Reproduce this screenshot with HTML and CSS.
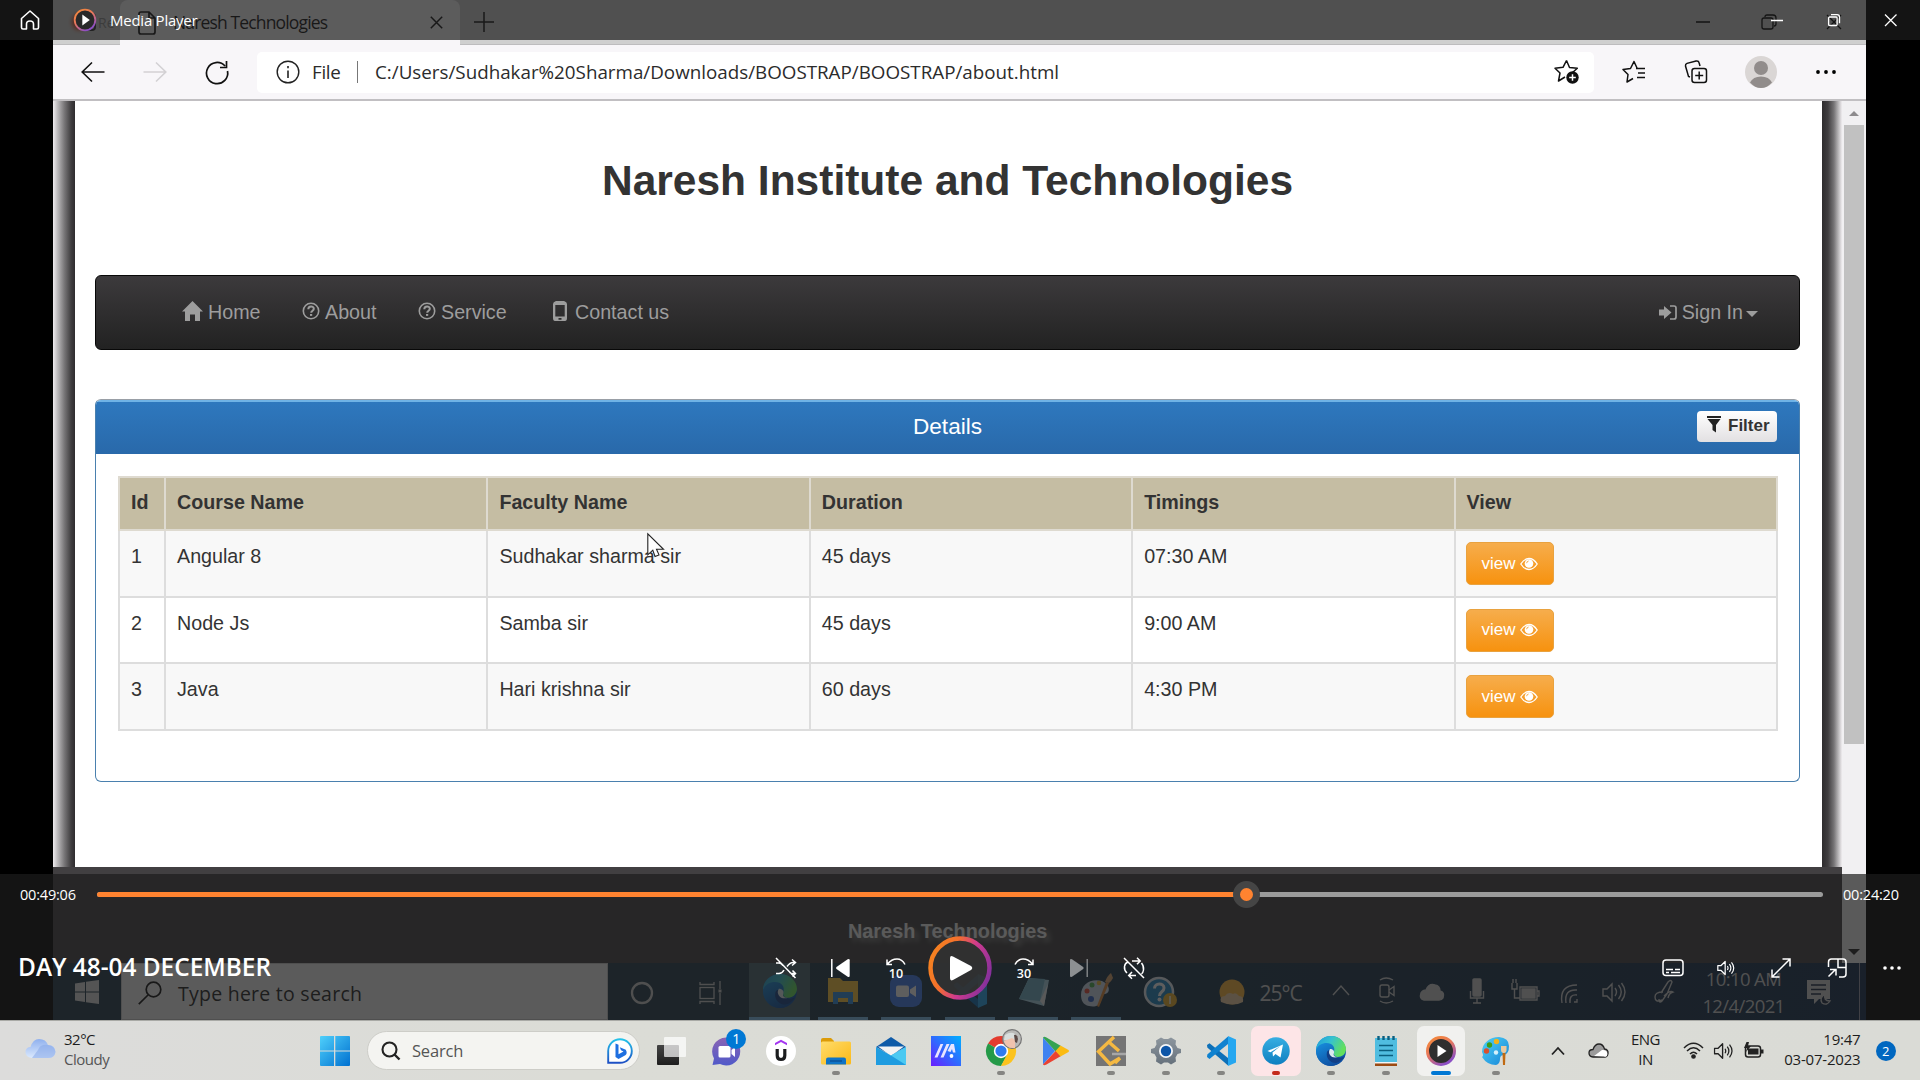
FILE: index.html
```html
<!DOCTYPE html>
<html lang="en">
<head>
<meta charset="utf-8">
<title>Media Player</title>
<link rel="stylesheet" href="styles.css">
</head>
<body>
<svg class="defs" aria-hidden="true">
  <defs>
    <linearGradient id="gRing" x1="0" y1=".3" x2="1" y2=".7"><stop offset="0" stop-color="#f58220"/><stop offset=".3" stop-color="#f4702c"/><stop offset=".6" stop-color="#cf3a8e"/><stop offset="1" stop-color="#83309c"/></linearGradient>
    <linearGradient id="gRing2" x1="0" y1="0" x2=".6" y2="1"><stop offset="0" stop-color="#f58a35"/><stop offset=".5" stop-color="#e8785c"/><stop offset="1" stop-color="#8c4fc4"/></linearGradient>
    <linearGradient id="gWin" x1="0" y1="0" x2="1" y2="1"><stop offset="0" stop-color="#4fd0fb"/><stop offset="1" stop-color="#0070d0"/></linearGradient>
    <linearGradient id="gEdgeA" x1="0" y1="0" x2="1" y2=".4"><stop offset="0" stop-color="#1f9bdc"/><stop offset=".5" stop-color="#35c1d0"/><stop offset="1" stop-color="#63e05c"/></linearGradient>
    <linearGradient id="gEdgeB" x1="0" y1="0" x2=".6" y2="1"><stop offset="0" stop-color="#1790df"/><stop offset="1" stop-color="#0f4ea0"/></linearGradient>
    <linearGradient id="gFolder" x1="0" y1="0" x2="1" y2="1"><stop offset="0" stop-color="#ffdc6b"/><stop offset="1" stop-color="#fbb917"/></linearGradient>
    <linearGradient id="gMa" x1="0" y1="1" x2="1" y2="0"><stop offset="0" stop-color="#6a1cff"/><stop offset=".5" stop-color="#2f6bff"/><stop offset="1" stop-color="#00b0ff"/></linearGradient>
    <linearGradient id="gChat" x1="0" y1="0" x2="0" y2="1"><stop offset="0" stop-color="#8a64b4"/><stop offset="1" stop-color="#5059c9"/></linearGradient>
    <linearGradient id="gCloud" x1="0" y1="0" x2="0" y2="1"><stop offset="0" stop-color="#8fb0ee"/><stop offset="1" stop-color="#dbe9fd"/></linearGradient>
    <linearGradient id="gTg" x1="0" y1="0" x2="0" y2="1"><stop offset="0" stop-color="#37aee2"/><stop offset="1" stop-color="#0f7fc0"/></linearGradient>
    <linearGradient id="gPaint" x1="0" y1="0" x2="1" y2="1"><stop offset="0" stop-color="#4fd2f7"/><stop offset="1" stop-color="#1583d6"/></linearGradient>
    <linearGradient id="gGear" x1="0" y1="0" x2="0" y2="1"><stop offset="0" stop-color="#8d969e"/><stop offset="1" stop-color="#66717c"/></linearGradient>
    <linearGradient id="gDark" x1="0" y1="0" x2="0" y2="1"><stop offset="0" stop-color="#444"/><stop offset="1" stop-color="#1e1e1e"/></linearGradient>
    <linearGradient id="gBing" x1="0" y1="0" x2="0" y2="1"><stop offset="0" stop-color="#24c3ea"/><stop offset="1" stop-color="#1d4fc4"/></linearGradient>
    <symbol id="eye" viewBox="0 0 18 14"><path d="M.8 7C3.500 2.800 6 1.500 9 1.500S14.500 2.800 17.200 7c-2.700 4.200-5.200 5.500-8.200 5.500S3.500 11.200.8 7z" fill="none" stroke="#fff" stroke-width="1.300"/><circle cx="9" cy="6.500" r="4.300" fill="#fff"/><path d="M6.600 6.200A2.500 2.500 0 0 1 8.600 4" fill="none" stroke="#f4a338" stroke-width=".9"/></symbol>
    <symbol id="edge" viewBox="0 0 30 30"><circle cx="15" cy="15" r="15" fill="url(#gEdgeB)"/><path d="M0 14C0 6 7 0 15 0c9 0 15 7 15 13 0 5-4 8-8.500 8-4 0-5-1.500-4-3 1-2 0-7-6-7C6 11 1 13 0 14z" fill="url(#gEdgeA)"/><path d="M0 14C2 9 6 7 10.500 7c6 0 9 4 7.500 9-1 3 1 5.200 5 5.200 3 0 5-1 5.700-.9C27 25 22 30 15 30 7 30 0 24 0 14z" fill="url(#gEdgeB)"/><path d="M11 16c-1.500 6 3 11 9 11 4-1 7-4 8.300-6.500C24 23 18 22 17 17c-1-3-5-4-6-1z" fill="#123f86"/><path d="M14 13c3 0 4.500 2 4 4-1 2 0 4 4 4-3 1-6.500.500-8-2-1.300-2-1.300-4 0-6z" fill="#dbe9ee"/></symbol>
    <symbol id="vscode" viewBox="0 0 30 30"><path d="M1 9l2.500-1.800L22 22v7.500L1.300 11.500z" fill="#0d70b8"/><path d="M1 21l2.500 2L22 8V.5L1.300 18.500z" fill="#0f82d0"/><path d="M22 0l8 3.500v23L22 30z" fill="#25a7f0"/></symbol>
    <symbol id="glyphQ" viewBox="0 0 18 18"><circle cx="9" cy="9" r="7.700" fill="none" stroke="#9d9d9d" stroke-width="1.600"/><path d="M6.300 7.300c0-3.600 5.500-3.600 5.500-.5 0 2-2.600 1.800-2.600 4" fill="none" stroke="#9d9d9d" stroke-width="2"/><path d="M8 12h2.200v1.900H8z" fill="#9d9d9d"/></symbol>
    <symbol id="speaker" viewBox="0 0 22 20"><path d="M1 7h4l5-5v16l-5-5H1z" fill="none" stroke="currentColor" stroke-width="1.500" stroke-linejoin="round"/><path d="M12.700 7.500q1.600 2.500 0 5M15.200 5.200q3.500 4.800 0 9.600M17.700 3q5.500 7 0 14" fill="none" stroke="currentColor" stroke-width="1.400"/></symbol>
  </defs>
</svg>

<div class="desktop">
  <main class="player">
    <div class="video">
      <div class="tabstrip">
        <div class="tab-prev"><i class="rec-dot"></i><i class="rec-box"></i><span>Re</span></div>
        <div class="tab">
          <svg class="tab-doc" width="18" height="24" viewBox="0 0 18 24"><path d="M3 1h8l6 6v14q0 2-2 2H3q-2 0-2-2V3q0-2 2-2zM11 1v6h6" fill="none" stroke="#111" stroke-width="1.700"/></svg>
          <span class="tab-title">Naresh Technologies</span>
          <svg width="13" height="13" viewBox="0 0 13 13"><path d="M.8.8l11.400 11.400M12.200.8L.8 12.200" stroke="#111" stroke-width="1.500"/></svg>
        </div>
        <svg class="tab-plus" width="20" height="20" viewBox="0 0 20 20"><path d="M10 0v20M0 10h20" stroke="#111" stroke-width="1.500"/></svg>
        <svg class="tab-win" width="146" height="16" viewBox="0 0 146 16" fill="none" stroke="#000" stroke-width="1.300"><path d="M0 8h14M131 1l14 14M145 1l-14 14"/><rect x="66" y="4" width="11" height="11" rx="2"/><path d="M69 3q0-2 2-2h6q3 0 3 3v6q0 2-2 2"/></svg>
      </div>

      <div class="toolbar">
        <svg width="24" height="20" viewBox="0 0 24 20" class="back"><path d="M23.500 10H1M11 .5L1.200 10 11 19.500" fill="none" stroke="#111" stroke-width="1.600"/></svg>
        <svg width="24" height="20" viewBox="0 0 24 20" class="fwd"><path d="M.5 10H23M13 .5L22.800 10 13 19.500" fill="none" stroke="#d3d1d4" stroke-width="1.600"/></svg>
        <svg width="24" height="24" viewBox="0 0 24 24" class="reload"><path d="M20 6A10.600 10.600 0 1 0 22.500 11M21.500 1v6.500H15" fill="none" stroke="#111" stroke-width="1.700"/></svg>
        <div class="address">
          <svg width="24" height="24" viewBox="0 0 24 24"><circle cx="12" cy="12" r="10.800" fill="none" stroke="#222" stroke-width="1.400"/><path d="M12 10.500V18M12 6v2.200" stroke="#222" stroke-width="1.600"/></svg>
          <span class="scheme">File</span>
          <i class="bar"></i>
          <span class="url">C:/Users/Sudhakar%20Sharma/Downloads/BOOSTRAP/BOOSTRAP/about.html</span>
          <svg class="addstar" width="26" height="26" viewBox="0 0 26 26"><path d="M12.500 1.500l3 7 7.800.8-5 4.500M11 18l-6.500 4 1.500-8L1 9.300l8-1 3.500-6.800" fill="none" stroke="#111" stroke-width="1.500" stroke-linejoin="round"/><circle cx="18.500" cy="18.500" r="6.200" fill="#111"/><path d="M18.500 15.200v6.600M15.200 18.500h6.600" stroke="#fff" stroke-width="1.500"/></svg>
        </div>
        <svg class="favs" width="24" height="24" viewBox="0 0 24 24"><path d="M15 8l-3-6.500L8.500 8.500 1 9.500l5 5L5 22l6-3.500M14 8.500h9M16 13h7M15 17.500h8" fill="none" stroke="#111" stroke-width="1.500" stroke-linejoin="round"/></svg>
        <svg class="coll" width="24" height="24" viewBox="0 0 24 24"><path d="M6 17L4.500 16.500 1.500 6q-.3-2 1.500-2.600L12 1q2.500-.5 3 1.500L16 6" fill="none" stroke="#111" stroke-width="1.500"/><rect x="8" y="8.500" width="14.500" height="14" rx="2.500" fill="none" stroke="#111" stroke-width="1.500"/><path d="M15.200 11.500v8M11.200 15.500h8" stroke="#111" stroke-width="1.500"/></svg>
        <svg class="avatar" width="32" height="32" viewBox="0 0 32 32"><circle cx="16" cy="16" r="16" fill="#dad6d5"/><circle cx="16" cy="12" r="7" fill="#918c8b"/><path d="M5 26.500q3-6 11-6t11 6Q22 32 16 32T5 26.500z" fill="#918c8b"/></svg>
        <svg class="dots" width="20" height="4" viewBox="0 0 20 4"><circle cx="2" cy="2" r="1.900"/><circle cx="10" cy="2" r="1.900"/><circle cx="18" cy="2" r="1.900"/></svg>
      </div>

      <div class="browser-body">
        <div class="shade shade-l"></div>
        <div class="page">
          <h1>Naresh Institute and Technologies</h1>
          <nav class="navbar">
            <a class="nav-home"><svg width="21" height="20" viewBox="0 0 21 20"><path d="M10.500 0L0 10.500h3V20h5v-6.500h5V20h5v-9.500h3z" fill="#9d9d9d"/></svg>Home</a>
            <a class="nav-about"><svg width="18" height="18"><use href="#glyphQ"/></svg>About</a>
            <a class="nav-service"><svg width="18" height="18"><use href="#glyphQ"/></svg>Service</a>
            <a class="nav-contact"><svg width="14" height="20" viewBox="0 0 14 20"><path fill-rule="evenodd" d="M3 0h8q3 1 3 3v14q0 3-2 3H2q-2 0-2-3V3q0-2 3-3zM2.300 4v11.500h9.400V4zM5.500 17v1.700h3V17z" fill="#9d9d9d"/></svg>Contact us</a>
            <a class="nav-signin"><svg width="18" height="15" viewBox="0 0 18 15"><path d="M0 4.500h5V1l7.500 6.500L5 14v-3.500H0z" fill="#9d9d9d"/><path d="M11 1h4q2 0 2 2v9q0 2-2 2h-4" fill="none" stroke="#9d9d9d" stroke-width="1.700"/></svg>Sign In<i class="caret"></i></a>
          </nav>
          <section class="panel">
            <header class="panel-head">
              <span>Details</span>
              <button class="filter"><svg width="14" height="17" viewBox="0 0 14 17"><path d="M0 0h14v2H0zM.5 3h13L9 9v7.500L5.500 14V9z" fill="#222"/></svg>Filter</button>
            </header>
            <table class="courses">
              <thead><tr><th class="c-id">Id</th><th>Course Name</th><th>Faculty Name</th><th>Duration</th><th>Timings</th><th>View</th></tr></thead>
              <tbody>
                <tr><td>1</td><td>Angular 8</td><td>Sudhakar sharma sir</td><td>45 days</td><td>07:30 AM</td><td><button class="view">view<svg width="18" height="14"><use href="#eye"/></svg></button></td></tr>
                <tr><td>2</td><td>Node Js</td><td>Samba sir</td><td>45 days</td><td>9:00 AM</td><td><button class="view">view<svg width="18" height="14"><use href="#eye"/></svg></button></td></tr>
                <tr><td>3</td><td>Java</td><td>Hari krishna sir</td><td>60 days</td><td>4:30 PM</td><td><button class="view">view<svg width="18" height="14"><use href="#eye"/></svg></button></td></tr>
              </tbody>
            </table>
          </section>
        </div>
        <div class="shade shade-r"></div>
        <div class="page-foot">Naresh Technologies</div>
        <div class="scrollbar"><i class="up"></i><i class="thumb"></i><i class="down"></i></div>
      </div>

      <div class="taskbar10">
        <div class="start10"><svg width="24" height="24" viewBox="0 0 24 24"><path d="M0 3.500L10 2v9.500H0zM11 1.800L24 0v11.500H11zM0 12.500h10V22L0 20.500zM11 12.500h13V24l-13-1.800z" fill="#dcdcdc"/></svg></div>
        <div class="search10"><svg width="24" height="24" viewBox="0 0 24 24"><circle cx="15.500" cy="8.500" r="7.300" fill="none" stroke="#111" stroke-width="1.700"/><path d="M10 14L.8 23.200" stroke="#111" stroke-width="1.700"/></svg><span>Type here to search</span></div>
        <div class="b10 cortana"><svg width="24" height="24" viewBox="0 0 24 24"><circle cx="12" cy="12" r="10" fill="none" stroke="#ccc" stroke-width="2.300"/></svg></div>
        <div class="b10 tview"><svg width="24" height="24" viewBox="0 0 24 24" fill="none" stroke="#ccc" stroke-width="1.300"><path d="M1 1v2.500h14V1M1 23v-2.500h14V23M21 0v8M21 12v12"/><rect x="1" y="6.500" width="14" height="11"/><path d="M19.500 10h3" stroke-width="3"/></svg></div>
        <div class="b10 act edge10"><svg width="34" height="34"><use href="#edge"/></svg></div>
        <div class="b10 run"><svg width="32" height="26" viewBox="0 0 32 26"><path d="M1 0h12l3 3h15v21H1z" fill="#ffc83d"/><path d="M6 26V14h20v12h-5v-6H11v6z" fill="#2d8fe0"/></svg></div>
        <div class="b10 run"><svg width="32" height="32" viewBox="0 0 32 32"><rect width="32" height="32" rx="9" fill="#3f7df0"/><rect x="6" y="10.500" width="13" height="11.500" rx="2" fill="#fff"/><path d="M20 14.500l6-4v11.500l-6-4z" fill="#fff"/></svg></div>
        <div class="b10 run"><svg width="34" height="34"><use href="#vscode"/></svg></div>
        <div class="b10 run"><svg width="32" height="30" viewBox="0 0 32 30"><path d="M12 2l20 2-5 26L2 23z" fill="#a8d5e8"/><path d="M12 2l16 1-5 22-21-2z" fill="#6fb1c9"/><path d="M23 25l4 5 4-22z" fill="#eee"/></svg></div>
        <div class="b10 run"><svg width="34" height="36" viewBox="0 0 34 36"><path d="M2 22C2 11 12 5 23 8c8 3 9 12 3 13-5 0-4 3-4 6-1 7-8 7-12 6-6-1-8-6-8-11z" fill="#cddcec"/><circle cx="8" cy="18" r="2.500" fill="#e8483a"/><circle cx="13" cy="12" r="2.500" fill="#49b04f"/><circle cx="20" cy="10" r="2.300" fill="#f2c038"/><circle cx="12" cy="26" r="3" fill="#2d5fc4"/><path d="M27 9l3 1-10 24-2-1z" fill="#e08a3a"/><path d="M26 9q2-6 6-9l2 5q-2 4-4 5z" fill="#d9a36a"/></svg></div>
        <div class="b10 help10"><svg width="34" height="34" viewBox="0 0 34 34"><circle cx="15" cy="16" r="14" fill="#1e86c4" stroke="#e6eef4" stroke-width="2.500"/><path d="M10.500 12.500c0-6 9.500-6 9.500-.5 0 4-4.500 3.500-4.500 8" fill="none" stroke="#fff" stroke-width="3"/><circle cx="15.500" cy="23.500" r="2" fill="#fff"/><circle cx="26" cy="24" r="7" fill="#f0b429"/><path d="M26 20v8" stroke="#fff" stroke-width="1.500"/></svg></div>
        <div class="weather10"><svg width="32" height="28" viewBox="0 0 32 28"><circle cx="16" cy="13" r="12.500" fill="#ffb73a"/><path d="M5 23q-2-6 4-6 3-5 8-2 3-2 6 2 5 0 4 6-10 5-22 0z" fill="#f3d3a5"/></svg><span>25°C</span></div>
        <svg class="tray10" width="293" height="30" viewBox="0 0 293 30" fill="none" stroke="#cfcfcf" stroke-width="1.400"><path d="M1 20l8-9 8 9"/><rect x="48" y="10" width="9" height="12" rx="2"/><path d="M57 15l5-3.500v9L57 17M48 5q6-4 13 0M48 26q6 4 13 0"/><path d="M92 25q-5-1-3-7 2-3 5-3 3-7 9-5 5 1 5 6 5 1 3 7-1 2-4 2z" fill="#cfcfcf"/><rect x="141" y="4" width="8" height="17" rx="1" fill="#cfcfcf"/><path d="M138.500 16v7h13v-7M145 23v5M141 28h8"/><path d="M188 12h17v13h-17zM205 16h2v5h-2M180 8v6h5v-6M181 4v4M184 4v4M182.500 14v9h5"/><path d="M190 14h13v9h-13z" fill="#cfcfcf"/><path d="M230 28q-3-18 15-18M234 28q-2-14 11-13M238 28q-1-9 7-8M242 27h3v-3"/><path d="M271 14h4l5-5v17l-5-5h-4zM283 13q3 4 0 8M286.500 10q5.500 7 0 14M289.500 8q7 9 0 18"/></svg>
        <svg class="pen10" width="20" height="24" viewBox="0 0 20 24" fill="none" stroke="#cfcfcf" stroke-width="1.400"><path d="M7 13L14 2q3-3 4 0l-5 12-5 7q-3 3-3-2M9 12q-8 0-8 5 0 6 7 3M10 16q6-6 9-4-4 1-5 6"/></svg>
        <div class="clock10"><span>10:10 AM</span><span>12/4/2021</span></div>
        <svg class="note10" width="24" height="27" viewBox="0 0 24 27"><path d="M0 0h23v19H12l-5 5v-5H0z" fill="#cfcfcf"/><path d="M4 5h15M4 9.500h15M4 14h10" stroke="#1a2740" stroke-width="1.500"/><path d="M18 14q-2 7 5 7-3 5-8 2-3-5 3-9z" fill="#1a2740" stroke="#cfcfcf" stroke-width="1.300"/></svg>
        <i class="peek10"></i>
      </div>
    </div>

    <svg class="cursor" width="18" height="28" viewBox="0 0 18 28"><path d="M.8.800v21l5-4.600 2.200 6.300 4-1.600-2.500-5.600h7z" fill="#fff" stroke="#222" stroke-width="1.100"/></svg>

    <div class="titlebar">
      <svg class="home" width="20" height="20" viewBox="0 0 20 20"><path d="M1.500 8.500L10 1l8.500 7.500v9q0 1.500-1.500 1.500h-3.500v-5q0-3-3.500-3t-3.500 3v5H3q-1.500 0-1.500-1.500z" fill="none" stroke="#fff" stroke-width="1.600" stroke-linejoin="round"/></svg>
      <svg class="logo" width="24" height="24" viewBox="0 0 24 24"><circle cx="12" cy="12" r="10.300" fill="#292929" stroke="url(#gRing2)" stroke-width="1.800"/><path d="M9.300 6.500l7.500 5.500-7.500 5.500z" fill="#fff"/></svg>
      <span class="app-name">Media Player</span>
      <svg class="winbtns" width="126" height="12" viewBox="0 0 126 12" fill="none" stroke="#fff" stroke-width="1.300"><path d="M0 6.500h12M114 .500l11.500 11.500M125.500.500L114 12"/><rect x="57.600" y="3" width="8.500" height="8.500" rx="1"/><path d="M60 .7h6q2.500 0 2.500 2.500v6"/></svg>
    </div>

    <div class="controls">
      <div class="seek">
        <span>00:49:06</span>
        <div class="track"><i class="fill"></i><i class="knob"></i></div>
        <span>00:24:20</span>
      </div>
      <div class="buttons">
        <div class="media-title">DAY 48-04 DECEMBER</div>
        <div class="transport">
          <svg width="22" height="22" viewBox="0 0 22 22" fill="none" stroke="#fff" stroke-width="1.500"><path d="M1 1l19.500 20M1 6h3q2 0 4 2.500M1 16.500h3q3 0 5-3.500M12 9.500q3-4 6-4h2M14.500 15.500q1.500 1 3.500 1h2M17 2.500l3.500 3-3.500 3M17.500 13.500l3 3-3 3"/></svg>
          <svg width="22" height="20" viewBox="0 0 22 20"><path d="M1.800 1v18" stroke="#fff" stroke-width="1.500"/><path d="M17.700 1.300q2-1 2 1v15.400q0 2-2 1L6.500 11q-1-1 0-2z" fill="#fff"/></svg>
          <svg width="22" height="22" viewBox="0 0 22 22"><path d="M2 2.500v5h5M2.500 7q4-5 9.500-5 5 0 8 5.500" fill="none" stroke="#fff" stroke-width="1.500"/><text x="11" y="20.500" text-anchor="middle" class="skip">10</text></svg>
          <svg width="64" height="64" viewBox="0 0 64 64" class="play"><circle cx="32" cy="32" r="29.500" fill="#333" fill-opacity=".85" stroke="url(#gRing)" stroke-width="4.500"/><path d="M22 22.500q0-3.500 3-2L43 30q2.500 2 0 4L25 44q-3 1.500-3-2z" fill="#fff"/></svg>
          <svg width="22" height="22" viewBox="0 0 22 22"><path d="M20 2.500v5h-5M19.500 7Q15.500 2 10 2 5 2 2 7.500" fill="none" stroke="#fff" stroke-width="1.500"/><text x="11" y="20.500" text-anchor="middle" class="skip">30</text></svg>
          <svg width="22" height="20" viewBox="0 0 22 20"><path d="M19.200 1v18" stroke="#8d9092" stroke-width="1.300"/><path d="M4 1.300q-2-1-2 1v15.400q0 2 2 1L15.200 11q1-1 0-2z" fill="#8d9092"/></svg>
          <svg width="22" height="22" viewBox="0 0 22 22" fill="none" stroke="#fff" stroke-width="1.500"><path d="M1 1l20 20M4 16Q1 13 1.500 9.500 2 6 5 5M9 4h8M14 .8L17.200 4 14 7.200M18.500 6Q21 9 20.500 13q-.5 3-2 4M13 18.500H6M9 15l-3.300 3.500L9 21.700"/></svg>
        </div>
        <div class="extras">
          <svg width="22" height="18" viewBox="0 0 22 18" fill="none" stroke="#fff" stroke-width="1.500"><rect x="1" y="1" width="20" height="15.500" rx="3"/><path d="M4 10.500h7M13 10.500h5M4 13.500h3M9 13.500h9" stroke-width="1.700"/></svg>
          <svg width="18" height="18" viewBox="0 0 22 20" color="#fff"><use href="#speaker"/></svg>
          <svg width="20" height="20" viewBox="0 0 20 20" fill="none" stroke="#fff" stroke-width="1.500"><path d="M1.500 18.500l17-17M11.500 1h7.500v7.500M1 11.500V19h7.500"/></svg>
          <svg width="20" height="20" viewBox="0 0 20 20" fill="none" stroke="#fff" stroke-width="1.500"><path d="M1.500 9V4q0-3 3-3H16q3 0 3 3v12q0 3-3 3h-4M11 1v8.500h8M1.500 18.500l7-7M3 11.500h6v6"/></svg>
          <svg width="18" height="4" viewBox="0 0 18 4" fill="#fff"><circle cx="2" cy="2" r="1.800"/><circle cx="9" cy="2" r="1.800"/><circle cx="16" cy="2" r="1.800"/></svg>
        </div>
      </div>
    </div>
  </main>

  <footer class="taskbar">
    <div class="weather">
      <svg width="31" height="21" viewBox="0 0 31 21"><path d="M7 20q-7-1-6.500-7 1-4 5-4Q8 1 14 1q7 0 9 6 7 0 7.500 7-1 6-7 6z" fill="url(#gCloud)"/><path d="M13 12q2-6 10-5 7 1 7.500 7-1 6-7 6H7" fill="#86a7e8" fill-opacity=".55"/></svg>
      <div class="two"><span>32°C</span><span class="dim">Cloudy</span></div>
    </div>
    <svg class="start" width="30" height="30" viewBox="0 0 30 30"><path d="M0 1q0-1 1-1h13v14.400H0zM15.300 0H29q1 0 1 1v13.400H15.300zM0 15.600h14V30H1q-1 0-1-1zM15.300 15.600H30V29q0 1-1 1H15.300z" fill="url(#gWin)"/></svg>
    <div class="search">
      <svg width="20" height="20" viewBox="0 0 20 20"><circle cx="8.500" cy="8.500" r="7" fill="none" stroke="#222" stroke-width="2.100"/><path d="M13.500 13.500l5 5" stroke="#222" stroke-width="2.400"/></svg>
      <span>Search</span>
      <svg class="bing" width="26" height="26" viewBox="0 0 26 26"><path d="M1.200 24.800V13A11.800 11.800 0 1 1 13 24.800z" fill="#fff" stroke="url(#gBing)" stroke-width="1.900"/><path d="M8.500 5.500l3 1.200v9.500l5-2.700-2.500-1.200-1.200-3 6 2.500q2 3.500-.5 5.500l-6.800 3.700-3-2z" fill="#1e6fe0"/></svg>
    </div>
    <div class="apps">
      <div class="app"><svg width="30" height="30" viewBox="0 0 30 30"><rect x="1" y="9" width="22" height="20" rx="1" fill="url(#gDark)"/><rect x="8" y="1" width="22" height="20" rx="1" fill="#fff" fill-opacity=".7"/></svg></div>
      <div class="app"><svg width="30" height="30" viewBox="0 0 30 30"><path d="M15 1.500a14 14 0 1 1-6 26.500L1.500 29l1.500-6.500A14 14 0 0 1 15 1.500z" fill="url(#gChat)"/><rect x="7.500" y="10" width="12" height="11.500" rx="1.500" fill="#fff"/><path d="M20.500 14l3.500-3v10l-3.500-3z" fill="#fff"/></svg><b class="count">1</b></div>
      <div class="app"><svg width="30" height="30" viewBox="0 0 30 30"><circle cx="15" cy="15" r="15" fill="#fff"/><path d="M9 9.300V6.900l6-3.200 6 3.200v2.400l-6-3.200z" fill="#a435f0"/><path d="M11.200 13v6.500q0 4 3.800 4t3.800-4V13" fill="none" stroke="#1c1d1f" stroke-width="3.200"/></svg></div>
      <div class="app on"><svg width="30" height="28" viewBox="0 0 30 28"><path d="M0 3q0-2 2-2h8l3 3v4H0z" fill="#dc9b08"/><rect y="4.500" width="30" height="23" rx="1.500" fill="url(#gFolder)"/><path d="M5 27.500v-5q0-2 2-2h16q2 0 2 2v5z" fill="#0f74c6"/><path d="M9 24h12" stroke="#0a4c94" stroke-width="1.300"/></svg></div>
      <div class="app"><svg width="30" height="28" viewBox="0 0 30 28"><path d="M0 10L15 0l15 10-15 8z" fill="#0f5ba8"/><path d="M2 9.500h26L15 19z" fill="#f3f3f3"/><path d="M0 10l15 8.500L30 10v18H0z" fill="#1f9ce0"/><path d="M30 10v18L15 18.500z" fill="#4cc9f2"/></svg></div>
      <div class="app"><svg width="30" height="30" viewBox="0 0 30 30"><path d="M0 0h30v30H0z" fill="url(#gMa)"/><path d="M3.500 21.500L9.500 8h2.800L6.500 21.500zM9.500 21.500L15.500 8h3L12.500 21.500zM16.500 15L20 8h3l1.500 8.500H22L21 13l-1.500 3z" fill="#e9e4ff"/><circle cx="20.500" cy="20" r="1.900" fill="#fff"/></svg></div>
      <div class="app on"><svg width="30" height="30" viewBox="0 0 30 30"><path d="M15 15L2 7.500A15 15 0 0 1 28 7.500z" fill="#e33b2e"/><path d="M2 7.500A15 15 0 0 0 15 30l6.500-11.200-6.500-3.800z" fill="#249a48"/><path d="M28 7.500A15 15 0 0 1 15 30l6-11.500V8z" fill="#fcc31e"/><circle cx="15" cy="15" r="7.200" fill="#fff"/><circle cx="15" cy="15" r="5.600" fill="#2f7bf0"/></svg><svg class="profile" width="20" height="20" viewBox="0 0 20 20"><circle cx="10" cy="10" r="9.400" fill="#b9b9b7" stroke="#777" stroke-width="1.200"/><path d="M3 6q6-4 10-1v6H2z" fill="#d9dedd"/><path d="M2 12l8-3 3 2v8Q4 20 2 12z" fill="#f1c3ae"/><path d="M12 6q3-1 4 4l-1 4-2-1z" fill="#5c4b48"/></svg></div>
      <div class="app"><svg width="28" height="30" viewBox="0 0 28 30"><path d="M1 1.500v27L13 15z" fill="#3f82f0"/><path d="M1 1.500Q2 .3 4 1.300L19 10l-5 6z" fill="#35a351"/><path d="M1 28.500q1 1.200 3 .2L19 20l-5-5.500z" fill="#ea4232"/><path d="M18.500 9.500L26.500 14q1.200 1 0 2l-8 4.500L13.500 15z" fill="#fbbb12"/></svg></div>
      <div class="app on"><svg width="30" height="30" viewBox="0 0 30 30"><path d="M0 0h30v30H0z" fill="#757575"/><path d="M18 1L2.500 15.500 14 28l10-6M14 7l9 8M24 22l-5 5" fill="none" stroke="#f5b942" stroke-width="3.400"/><path d="M16 18h14" stroke="#a7a7a7" stroke-width="2.500"/></svg></div>
      <div class="app on"><svg width="30" height="30" viewBox="0 0 30 30"><path d="M10 1.500l3 1.500h4l3-1.500 5 3-.5 4 2 3.500 3.500 1v4l-3.500 1-2 3.500.5 4-5 3-3-2h-4l-3 2-5-3 .5-4-2-3.500L0 17v-4l3.500-1 2-3.500-.5-4z" fill="url(#gGear)"/><circle cx="15" cy="15" r="7" fill="#f4f6f8"/><circle cx="15" cy="15" r="5.200" fill="#0c55a8"/></svg></div>
      <div class="app on"><svg width="30" height="30"><use href="#vscode"/></svg></div>
      <div class="app alert"><svg width="28" height="28" viewBox="0 0 28 28"><circle cx="14" cy="14" r="13.700" fill="url(#gTg)"/><path d="M5.500 14L21 7.500l-2.500 13-5-3.500-2.500 2.500-.5-4 8-6.500-10 6.200z" fill="#fff"/></svg></div>
      <div class="app on"><svg width="30" height="30"><use href="#edge"/></svg></div>
      <div class="app on"><svg width="22" height="30" viewBox="0 0 22 30"><path d="M0 2h22v24H0z" fill="#50bde0"/><path d="M0 26h22v1.500H0z" fill="#f4f4f4"/><path d="M0 27.500h22V30H0z" fill="#9c4a12"/><path d="M4 9.500h14M4 14.500h14M4 19.500h14" stroke="#0b5f80" stroke-width="1.600"/><path d="M3.500 0v4M8.500 0v4M13.500 0v4M18.500 0v4" stroke="#0b5f80" stroke-width="2.400"/></svg></div>
      <div class="app current"><svg width="30" height="30" viewBox="0 0 30 30"><circle cx="15" cy="15" r="13.500" fill="#2e2e2e" stroke="url(#gRing2)" stroke-width="3"/><path d="M11.500 9l9 6-9 6z" fill="#fff"/></svg></div>
      <div class="app on"><svg width="30" height="30" viewBox="0 0 30 30"><path d="M1 16C1 7 9 1 18 1q10 1 10 9 0 8-5 9-4 0-4 4 0 5-4 6Q6 29 1 21q2-1 0-5z" fill="url(#gPaint)"/><circle cx="8.500" cy="9" r="2.700" fill="#3b9c1b"/><circle cx="15.500" cy="5.500" r="2.700" fill="#f0b21d"/><circle cx="5.500" cy="15" r="2.700" fill="#d9502c"/><circle cx="15" cy="16.500" r="2.200" fill="#d4f0fb"/><path d="M21.500 17h3l-.5 12h-2z" fill="#c06a12"/><path d="M20 10h5.500v4q0 3-2.700 3T20 14z" fill="#e9c9a0"/></svg></div>
    </div>
    <div class="tray">
      <svg width="14" height="10" viewBox="0 0 14 10"><path d="M1 8.500l6-6.500 6 6.500" fill="none" stroke="#222" stroke-width="1.800"/></svg>
      <svg class="t-cloud" width="21" height="15" viewBox="0 0 21 15"><path d="M5 14q-4-.5-4-4t4-3.500Q7 1 11 1t5.500 5q4 .5 3.500 4.500T16 14z" fill="#9b9b9b" stroke="#222" stroke-width="1.300"/><path d="M6 13l8-6q5-.5 5.300 3.500T16 13.400z" fill="#fff"/></svg>
      <div class="lang"><span>ENG</span><span>IN</span></div>
      <svg class="t-wifi" width="21" height="17" viewBox="0 0 21 17" fill="none" stroke="#222" stroke-width="1.500"><path d="M1 6q9.500-9.500 19 0M4 9q6.500-6.500 13 0M7 12q3.500-3.500 7 0"/><circle cx="10.500" cy="14.500" r="1.600" fill="#222"/></svg>
      <svg class="t-vol" width="21" height="18" viewBox="0 0 22 20" color="#222"><use href="#speaker"/></svg>
      <svg class="t-bat" width="21" height="17" viewBox="0 0 21 17"><rect x="2.500" y="4" width="15" height="11" rx="2.500" fill="none" stroke="#222" stroke-width="1.500"/><path d="M5 6.500h10.500v6H5zM18 7.500h2.500v4H18z" fill="#222"/><path d="M3.500 0L1 6h3l-1 4 5-6H5l1-4z" fill="#222"/></svg>
      <div class="clock"><span>19:47</span><span>03-07-2023</span></div>
      <b class="badge">2</b>
    </div>
  </footer>
</div>
</body>
</html>
```
FILE: styles.css
```css
* { box-sizing: border-box; }
body { margin: 0; background: #000; font-family: "Open Sans", "Noto Sans", sans-serif; }
svg { display: block; flex: none; overflow: visible; }
i { display: block; flex: none; }
.defs { position: absolute; width: 0; height: 0; }
.desktop { width: 1920px; height: 1080px; display: flex; flex-direction: column; overflow: hidden; }
.player { position: relative; height: 1020px; background: #000; flex: none; }
.video { width: 1813px; height: 1020px; margin-left: 53px; display: flex; flex-direction: column; overflow: hidden; }

/* browser chrome */
.tabstrip { height: 45px; display: flex; background: #cfcfcf; flex: none; border-bottom: 1px solid #bdbcbe; }
.tab-prev { width: 67px; height: 44px; padding-left: 19px; display: flex; align-items: center; font-size: 14px; color: #8a8a8a; }
.rec-dot { width: 14px; height: 16px; border-radius: 50%; background: #e0451e; filter: blur(2px); }
.rec-box { width: 12px; height: 18px; border: 2px solid #333; border-radius: 4px; margin: 0 2px 0 -2px; }
.tab { width: 340px; height: 45px; padding-left: 18px; display: flex; align-items: center; background: #f8f6f9; border-radius: 8px 8px 0 0; }
.tab-title { width: 248px; margin: -1px 9px 0 17px; font-size: 17.500px; letter-spacing: -0.850px; color: #111; white-space: nowrap; }
.tab-plus { margin: 12px 0 0 14px; }
.tab-win { margin: 14px 0 0 1202px; }
.toolbar { height: 56px; display: flex; align-items: center; background: #f8f6f9; border-bottom: 2px solid #c1bfc2; padding-left: 28px; flex: none; }
.fwd { margin-left: 38px; }
.reload { margin: 0 0 0 38px; }
.address { width: 1337px; height: 41px; margin-left: 28px; padding-left: 19px; display: flex; align-items: center; background: #fff; border-radius: 5px; font-size: 18.800px; color: #2b2b2b; white-space: nowrap; }
.scheme { width: 45px; margin: -1px 0 0 12px; letter-spacing: -0.300px; }
.address .bar { width: 1px; height: 22px; background: #777; }
.url { width: 1179px; margin: -1px 0 0 17px; letter-spacing: 0; }
.favs { margin-left: 28px; }
.coll { margin-left: 38px; }
.avatar { margin-left: 37px; }
.dots { margin-left: 39px; }

/* web page */
.browser-body { height: 862px; display: grid; grid-template-columns: 22px 1747px 20px 24px; grid-template-rows: 766px 96px; background: #fff; flex: none; }
.shade-l { background: linear-gradient(90deg, #efecef, #b9b7b9 22%, #777577 52%, #403e40 82%, #2e2c2e); }
.shade-r { background: linear-gradient(90deg, #2e2c2e, #403e40 30%, #777577 60%, #b9b7b9 82%, #efecef); }
.page { padding: 54px 22px 0 20px; font-family: "Liberation Sans", Arial, sans-serif; color: #333; }
.page h1 { margin: 0 0 68px; height: 52px; line-height: 52px; font-size: 42.500px; text-align: center; white-space: nowrap; }
.navbar { height: 75px; display: flex; align-items: center; padding: 0 0 0 86px; border: 1px solid #080808; border-radius: 6px; background: linear-gradient(#3c3a3c, #222); font-size: 19.700px; color: #9d9d9d; }
.navbar a { display: flex; align-items: center; gap: 5px; white-space: nowrap; }
.navbar svg { margin-top: -3px; }
.nav-home { width: 120px; }
.nav-about { width: 116px; }
.nav-service { width: 135px; }
.nav-contact svg { margin-right: 3px; }
.nav-signin { margin-left: auto; margin-right: 42px; }
.nav-signin.nav-signin svg { margin-top: 0; }
.caret { border: 6px solid transparent; border-top-color: #9d9d9d; border-bottom: 0; margin: 2px -1px 0 -2px; }
.panel { height: 383px; margin-top: 49px; border: 1px solid #4a80ae; border-radius: 6px; overflow: hidden; border-top: 1px solid #999fa6; }
.panel-head { position: relative; height: 54px; display: flex; align-items: center; justify-content: center; padding-bottom: 2px; border-top: 2px solid #6fb3e6; background: linear-gradient(#2e78be, #2969aa); color: #fff; font-size: 22.600px; }
.filter { position: absolute; right: 22px; top: 9px; width: 80px; height: 31px; display: flex; align-items: flex-start; gap: 7px; padding: 5px 0 0 10px; border: 0; border-radius: 4px; background: linear-gradient(#fff, #e2e0e2); font: bold 17px/19px "Liberation Sans", Arial, sans-serif; color: #333; }
.courses { width: 1660px; margin: 22px 0 0 22px; border-collapse: collapse; table-layout: fixed; font-size: 19.700px; line-height: 28px; }
.courses th, .courses td { border: 2px solid #ddd; padding: 0 0 0 11px; text-align: left; vertical-align: top; }
.courses th { height: 53px; padding-top: 10px; background: #c5bda3; border-color: #dedad0; }
.courses td { height: 66.500px; padding-top: 11px; }
.courses th:nth-child(1), .courses td:nth-child(1) { border-right-width: 1px; }
.courses tbody tr:nth-child(odd) { background: #f8f8f8; }
.c-id { width: 46px; }
.view { width: 88px; height: 43px; display: flex; align-items: center; gap: 4px; margin-left: -1px; padding: 0 0 0 15px; border: 1px solid #e9a23f; border-radius: 5px; background: linear-gradient(#f6ad4c, #f7920f); font: 17px "Liberation Sans", Arial, sans-serif; color: #fff; }
.page-foot { grid-column: 1 / 4; grid-row: 2; background: #413f41; color: #f0f0f0; padding: 52px 0 0 795px; font: bold 19.850px/24px "Liberation Sans", Arial, sans-serif; white-space: nowrap; text-shadow: 4px 4px 5px #888; }
.scrollbar { grid-column: 4; grid-row: 1 / 3; display: flex; flex-direction: column; background: #f1f0f2; padding-left: 2px; }
.up { margin: 10px 0 9px 5px; width: 10px; border: 5px solid transparent; border-bottom-color: #8d8b8d; border-top: 0; }
.thumb { width: 20px; height: 619px; background: #c1c1c1; }
.down { margin: 205px 0 0 4px; width: 10px; border: 6px solid transparent; border-top-color: #222; border-bottom: 0; }

/* taskbar inside the recording */
.taskbar10 { height: 57px; display: flex; background: linear-gradient(90deg, #1f3748 0, #1f3a48 40%, #132c4c); flex: none; align-items: flex-start; color: #cfcfcf; }
.start10 { width: 68px; padding: 17px 0 0 22px; }
.search10 { width: 487px; height: 57px; padding-left: 16px; display: flex; align-items: center; gap: 16px; background: #f5f5f5; border: 1px solid #ccc; color: #222; font-size: 19.500px; white-space: nowrap; letter-spacing: .25px; }
.search10 svg { margin-top: 2px; }
.search10 span { margin-top: 3px; }
.b10 { width: 50px; height: 57px; margin-right: 13.300px; display: flex; align-items: center; justify-content: center; padding-top: 2px; }
.cortana { width: 67px; margin: 0; }
.tview { width: 71px; margin: 0 3px 0 0; }
.run { border-bottom: 3px solid #7ec0ef; }
.act { width: 61px; margin-right: 8px; background: #4a6470; border-bottom: 3px solid #7ec0ef; }
.help10 { width: 54px; margin-right: 6px; }
.weather10 { width: 126px; margin-left: 22px; height: 57px; padding-top: 2px; display: flex; align-items: center; gap: 11px; font-size: 21px; letter-spacing: -1px; }
.tray10 { margin: 12px 28px 0 -10px; }
.pen10 { margin: 17px 30px 0 1px; }
.clock10 { width: 78px; padding-top: 2px; display: flex; flex-direction: column; align-items: center; font-size: 18.500px; line-height: 27px; letter-spacing: -0.600px; white-space: nowrap; }
.note10 { margin: 17px 0 0 25px; }
.peek10 { width: 1px; height: 57px; margin-left: 28px; background: #99a; }

/* overlays of the media player */
.cursor { position: absolute; left: 647px; top: 533px; }
.titlebar { position: absolute; left: 0; top: 0; width: 1920px; height: 40px; display: flex; align-items: center; background: rgba(28, 28, 28, .71); color: #fff; }
.home { margin-left: 20px; }
.logo { margin-left: 33px; }
.app-name { margin: 0 0 0 13px; font-size: 15px; letter-spacing: -0.250px; white-space: nowrap; }
.winbtns { margin: -1px 23px 0 auto; }
.controls { position: absolute; left: 0; top: 874px; width: 1920px; height: 146px; background: rgba(28, 28, 28, .71); color: #fff; }
.seek { height: 42px; display: flex; align-items: center; padding-left: 20px; font-size: 14.500px; letter-spacing: -0.200px; }
.seek span { width: 58px; margin-top: -2px; white-space: nowrap; }
.track { width: 1726px; height: 5px; margin: -1px 20px 0 19px; display: flex; align-items: center; background: #9b9b9b; border-radius: 3px; }
.fill { width: 1136px; height: 5px; background: #ff8330; border-radius: 3px 0 0 3px; }
.knob { width: 27px; height: 27px; border-radius: 50%; border: 7px solid #454545; background: #ff8330; }
.buttons { height: 104px; display: grid; grid-template-columns: 775px 371px 1fr; align-items: center; }
.media-title { padding-left: 18px; margin-top: -3px; font-size: 24.400px; font-weight: 600; letter-spacing: 0; white-space: nowrap; }
.transport { display: flex; align-items: center; gap: 33px; }
.transport .play { margin: -1px -12px 0; }
.skip { font: 600 12.500px "Open Sans", sans-serif; fill: #fff; }
.extras { display: flex; align-items: center; justify-content: space-between; padding: 0 19px 0 516px; }
.extras svg:nth-child(2) { margin-left: -3px; }

/* desktop taskbar */
.taskbar { height: 60px; display: flex; align-items: center; background: linear-gradient(90deg, #dcdcdb, #dbdcd6 30%, #dadbd6); border-top: 1px solid #a9aaa6; color: #1d1d1d; font-size: 15px; letter-spacing: -0.500px; flex: none; }
.weather { width: 320px; padding-left: 25px; display: flex; align-items: center; gap: 8px; }
.two, .lang, .clock { display: flex; flex-direction: column; line-height: 20px; margin-top: -3px; white-space: nowrap; }
.weather svg { margin-top: -5px; }
.dim { color: #555; }
.search { width: 273px; height: 39px; margin-left: 17px; padding: 0 6px 0 13px; display: flex; align-items: center; background: #f4f4f1; border: 1px solid #cdcdc8; border-radius: 20px; font-size: 16.500px; color: #555; }
.search span { margin: -1px 0 0 11px; letter-spacing: -0.200px; }
.bing { margin-left: auto; }
.apps { display: flex; margin-left: 3px; }
.app { position: relative; width: 55px; height: 50px; display: flex; align-items: center; justify-content: center; }
.app::after { position: absolute; bottom: 1px; height: 4px; width: 8px; border-radius: 2px; background: #858582; }
.on::after, .alert::after, .current::after { content: ""; }
.alert, .current { background: #fde5e7; border-radius: 7px; width: 50px; margin: 0 2.500px; }
.alert::after { background: #c42b1c; }
.current { background: #f1f1ef; width: 48px; margin: 0 3.500px; }
.current::after { width: 20px; background: #0078d4; }
.count { position: absolute; right: 7px; top: 3px; width: 20px; height: 20px; border-radius: 50%; background: #0078d4; color: #fff; font: 14px/20px "Open Sans", sans-serif; text-align: center; }
.profile { position: absolute; right: 6px; top: 3px; }
.tray { display: flex; align-items: center; margin-left: 27.500px; }
.t-cloud { margin-left: 23px; }
.lang { width: 40px; margin-left: 17px; align-items: center; }
.t-wifi { margin-left: 17px; }
.t-vol { margin-left: 9px; }
.t-bat { margin-left: 9px; }
.clock { width: 97px; align-items: flex-end; letter-spacing: -0.200px; }
.badge { width: 20px; height: 20px; margin-left: 15px; border-radius: 50%; background: #0067c0; color: #fff; font: 13px/20px "Open Sans", sans-serif; text-align: center; }
```
